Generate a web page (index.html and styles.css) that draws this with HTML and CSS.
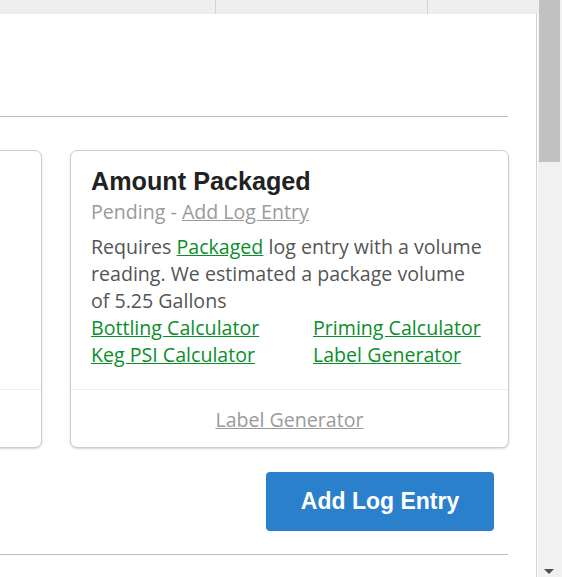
FILE: index.html
```html
<!DOCTYPE html>
<html>
<head>
<meta charset="utf-8">
<link rel="stylesheet" href="styles.css">
</head>
<body>
<div class="frame">
  <div class="page">
    <div class="tabs">
      <div class="tab tab-a"></div>
      <div class="tab tab-b"></div>
      <div class="tab tab-c"></div>
    </div>
    <div class="content">
      <div class="header-space"></div>
      <div class="rule"></div>
      <div class="cards">
        <div class="card">
          <div class="card-body"></div>
          <div class="card-footer"></div>
        </div>
        <div class="card">
          <div class="card-body">
            <h2 class="card-title">Amount Packaged</h2>
            <div class="status">Pending - <a href="#" class="muted-link">Add Log Entry</a></div>
            <p class="desc">Requires <a href="#" class="green">Packaged</a> log entry with a volume reading. We estimated a package volume of 5.25 Gallons</p>
            <div class="links">
              <a href="#" class="green">Bottling Calculator</a>
              <a href="#" class="green">Priming Calculator</a>
              <a href="#" class="green">Keg PSI Calculator</a>
              <a href="#" class="green">Label Generator</a>
            </div>
          </div>
          <div class="card-footer"><a href="#" class="muted-link">Label Generator</a></div>
        </div>
      </div>
      <div class="actions">
        <button class="btn">Add Log Entry</button>
      </div>
      <div class="rule rule-bottom"></div>
    </div>
  </div>
  <div class="scrollbar">
    <div class="thumb"></div>
    <div class="arrow-down"></div>
  </div>
</div>
</body>
</html>
```

FILE: styles.css
```css
html, body {
  margin: 0;
  padding: 0;
  background: #fff;
  overflow: hidden;
}
body {
  font-family: "Open Sans", "Liberation Sans", sans-serif;
}
.frame {
  display: flex;
  width: 562px;
  height: 577px;
}
.page {
  width: 538px;
  display: flex;
  flex-direction: column;
}
.tabs {
  height: 14px;
  background: #eeeeee;
  display: flex;
}
.tab {
  height: 14px;
}
.tab-a {
  width: 215px;
  border-right: 1px solid #d2d2d2;
}
.tab-b {
  width: 211px;
  border-right: 1px solid #d2d2d2;
}
.tab-c {
  flex: 1;
}
.content {
  width: 536px;
  flex: 1;
  border-right: 1px solid #d0d0d0;
  overflow: hidden;
}
.header-space {
  height: 102px;
}
.rule {
  width: 508px;
  height: 1px;
  background: #bdbdbd;
}
.cards {
  display: flex;
  gap: 28px;
  margin-top: 33px;
  margin-left: -397px;
}
.card {
  flex: 0 0 439px;
  height: 298px;
  box-sizing: border-box;
  border: 1px solid #cdcdcd;
  border-radius: 7px;
  box-shadow: 0 1px 2px rgba(0, 0, 0, 0.16);
  display: flex;
  flex-direction: column;
  background: #fff;
}
.card-body {
  height: 238px;
  box-sizing: border-box;
  padding: 15px 22px 0 20px;
}
.card-footer {
  flex: 1;
  border-top: 1px solid #eeeeee;
  display: flex;
  align-items: center;
  justify-content: center;
  font-size: 19.6px;
  line-height: 27px;
  padding-top: 1px;
}
.card-title {
  margin: 0 0 2px 0;
  font-family: "Liberation Sans", Arial, sans-serif;
  font-weight: bold;
  font-size: 25.2px;
  line-height: 30px;
  color: #222222;
}
.status {
  font-size: 19.6px;
  line-height: 27px;
  color: #9a9a9a;
}
.muted-link {
  color: #9a9a9a;
  text-decoration: underline;
}
.desc {
  margin: 8px 0 0 0;
  font-size: 19.6px;
  line-height: 27px;
  color: #555555;
}
.green {
  color: #0b8f2b;
  text-decoration: underline;
}
.links {
  display: grid;
  grid-template-columns: 222px 1fr;
  font-size: 19.6px;
  line-height: 27px;
}
.actions {
  width: 494px;
  display: flex;
  justify-content: flex-end;
  margin-top: 24px;
}
.btn {
  width: 228px;
  height: 59px;
  border: none;
  border-radius: 4px;
  background: #2a80cb;
  color: #ffffff;
  font-family: "Liberation Sans", Arial, sans-serif;
  font-weight: bold;
  font-size: 23px;
  padding: 0;
}
.rule-bottom {
  margin-top: 23px;
}
.scrollbar {
  width: 24px;
  height: 577px;
  background: #f1f1f1;
  display: flex;
  flex-direction: column;
  align-items: flex-start;
}
.thumb {
  width: 21px;
  height: 162px;
  margin-left: 1px;
  background: #c1c1c1;
}
.arrow-down {
  margin-top: auto;
  margin-bottom: 3px;
  margin-left: 6px;
  width: 0;
  height: 0;
  border-left: 5.5px solid transparent;
  border-right: 5.5px solid transparent;
  border-top: 5px solid #505050;
}
```
